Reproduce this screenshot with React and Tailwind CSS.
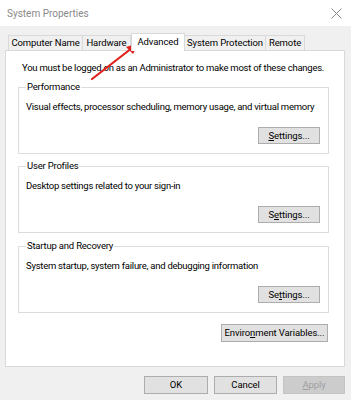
const font = { fontFamily: 'Roboto, "Noto Sans", sans-serif' };

const tabs = [
  { label: 'Computer Name', w: 'w-[75px]' },
  { label: 'Hardware', w: 'w-[49px]' },
  { label: 'Advanced', w: 'w-[54px]', active: true },
  { label: 'System Protection', w: 'w-[82px]' },
  { label: 'Remote', w: 'w-[40px]' },
];

function Btn({ children, className = '', disabled }) {
  return (
    <button
      className={`flex items-center justify-center whitespace-nowrap border text-[9.5px] leading-none tracking-[-0.1px] ${
        disabled ? 'border-[#c4c4c4] bg-[#cccccc] text-[#a0a0a0]' : 'border-[#adadad] bg-[#e1e1e1] text-black'
      } ${className}`}
    >
      {children}
    </button>
  );
}

function Group({ title, desc, children, className = '' }) {
  return (
    <fieldset className={`border border-[#dcdcdc] pl-[7px] pr-[8px] pb-[9px] ${className}`}>
      <legend className="whitespace-nowrap px-[1px] text-[9.5px] leading-[14px] tracking-[-0.2px] text-black">{title}</legend>
      <p className="mt-[6px] whitespace-nowrap text-[9.5px] leading-[14px] tracking-[-0.25px] text-black">{desc}</p>
      <div className="mt-[13px] flex justify-end">{children}</div>
    </fieldset>
  );
}

export default function App() {
  return (
    <div className="relative flex h-[400px] w-[351px] flex-col bg-[#f0f0f0]" style={font}>
      <div className="flex h-[26px] items-center justify-between bg-white pl-[7px] pr-[8px]">
        <span className="text-[10px] text-[#8a8a8a]">System Properties</span>
        <svg width="11" height="11" viewBox="0 0 11 11" className="mr-[1px]">
          <path d="M0.5 0.5 L10.5 10.5 M10.5 0.5 L0.5 10.5" stroke="#8a8a8a" strokeWidth="1" />
        </svg>
      </div>

      <div className="mt-[7px] flex h-[17px] items-end pl-[8px]">
        {tabs.map((t) => (
          <div
            key={t.label}
            className={`flex items-center justify-center whitespace-nowrap border border-b-0 border-[#d9d9d9] text-[9.5px] leading-none tracking-[-0.1px] text-black ${t.w} ${
              t.active ? 'relative z-10 -mb-[1px] h-[18px] bg-white pb-[2px]' : 'h-[15px] -ml-[1px] bg-[#f0f0f0] first:ml-0'
            }`}
          >
            {t.label}
          </div>
        ))}
      </div>

      <div className="ml-[5px] flex h-[317px] w-[340px] flex-col border border-[#d9d9d9] bg-white pl-[12px] pr-[15px]">
        <p className="mt-[10px] whitespace-nowrap pl-[4px] text-[9.5px] leading-[14px] tracking-[-0.25px] text-black">
          You must be logged on as an Administrator to make most of these changes.
        </p>

        <Group title="Performance" desc="Visual effects, processor scheduling, memory usage, and virtual memory" className="mt-[5px]">
          <Btn className="h-[17px] w-[62px]">
            <span><u>S</u>ettings...</span>
          </Btn>
        </Group>

        <Group title="User Profiles" desc="Desktop settings related to your sign-in" className="mt-[5px]">
          <Btn className="h-[17px] w-[62px]">
            <span>S<u>e</u>ttings...</span>
          </Btn>
        </Group>

        <Group title="Startup and Recovery" desc="System startup, system failure, and debugging information" className="mt-[6px]">
          <Btn className="h-[17px] w-[62px]">
            <span>Se<u>t</u>tings...</span>
          </Btn>
        </Group>

        <div className="mt-[11px] flex justify-end pr-[1px]">
          <Btn className="h-[18px] w-[107px]">
            <span>Enviro<u>n</u>ment Variables...</span>
          </Btn>
        </div>
      </div>

      <div className="mt-[9px] flex justify-end gap-[6px] pr-[6px]">
        <Btn className="h-[18px] w-[64px]">OK</Btn>
        <Btn className="h-[18px] w-[63px]">Cancel</Btn>
        <Btn className="h-[18px] w-[62px]" disabled>
          <span><u>A</u>pply</span>
        </Btn>
      </div>

      <svg className="pointer-events-none absolute left-0 top-0" width="351" height="400">
        <path d="M92 79 L132 48" stroke="#e0201b" strokeWidth="2.2" strokeLinecap="round" />
        <path d="M139 43 L126 47 L133 54 Z" fill="#e0201b" />
      </svg>
    </div>
  );
}
